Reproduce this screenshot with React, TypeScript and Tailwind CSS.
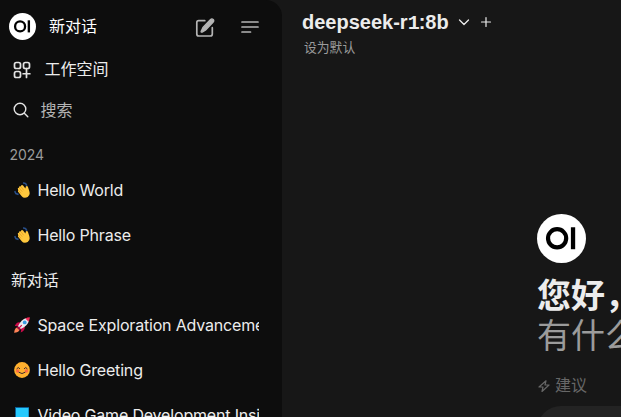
import React from "react";

const latin = "font-['Inter','Noto_Sans_CJK_SC',sans-serif]";

function Logo({ className }: { className: string }) {
  return (
    <svg viewBox="0 0 48 48" className={className}>
      <circle cx="24" cy="24" r="24" fill="#fff" />
      <circle cx="19.7" cy="23.8" r="8.9" fill="none" stroke="#000" strokeWidth="4.1" />
      <rect x="33.2" y="13" width="4.2" height="21.5" fill="#000" />
    </svg>
  );
}

function Wave() {
  return (
    <svg viewBox="0 0 16 16" className="h-4 w-4 shrink-0">
      <path d="M9 1Q12 .8 12.8 3.8M.7 9.2l1.2 2.3 2.7 1" fill="none" stroke="#284e88" strokeWidth="1.6" />
      <path d="M4.3 8.5 3.8 6.4Q4 5.2 5 5.900L5.200 4.600q.8-.9 1.600 0L7.300 3.200q1-.7 1.800.4l2.300 3 .4-2.100q1.200-1.300 2.100.2l.8 2.500q2.400 5.600-1 7.800-3.800 2-6.200-1.100L4.300 10q-.7-1 0-1.500Z" fill="#ffc83d" />
      <path d="m5.200 6 3 3.700M6.900 4.600l2.800 3.700M4.600 8.400l2.500 3" stroke="#d79023" strokeWidth=".6" fill="none" />
    </svg>
  );
}

function Rocket() {
  return (
    <svg viewBox="0 0 16 16" className="h-4 w-4 shrink-0">
      <path d="M5.5 5.2Q2.2 5 .8 9l3.5.3 3 3.2-.6 3Q11 13.8 10.8 10Z" fill="#ca0b4a" />
      <path d="M2.7 10.4Q.5 11.5.1 15.8q4.2-.2 5.4-2.8Z" fill="#ff8257" />
      <path d="M4 9.3Q7 2.2 12.5.9l2.6 2.5Q13.5 9 6.7 12.1Z" fill="#e9e9ef" />
      <path d="M11.3 1.5Q13.8.1 15.8.2q.2 2.2-1.2 4.5Z" fill="#ef2855" />
      <path d="m3.6 9.2 3.3 3.1-1.2 1-3-3Z" fill="#a20945" />
      <circle cx="10.7" cy="5.4" r="1.9" fill="#3a9be2" />
      <path d="m5 11 2.8-2.9" stroke="#d90b4c" strokeWidth="1.1" />
    </svg>
  );
}

function Smile() {
  return (
    <svg viewBox="0 0 16 16" className="h-4 w-4 shrink-0">
      <circle cx="8" cy="8" r="7.9" fill="#ffb02e" />
      <circle cx="3.6" cy="9" r="1.7" fill="#ff6a45" />
      <circle cx="12.4" cy="9" r="1.7" fill="#ff6a45" />
      <path d="M2.8 6.6q1.5-2.5 3 0M10.2 6.600q1.500-2.500 3 0M5 10.400q3 2.600 6 0" fill="none" stroke="#402a32" strokeWidth="1" strokeLinecap="round" />
    </svg>
  );
}

function Book() {
  return (
    <svg viewBox="0 0 16 16" className="h-4 w-4 shrink-0">
      <rect x="1" y="0" width="14" height="16" fill="#0b5d94" />
      <rect x="2" y="1" width="12.5" height="15" fill="#26c9fc" />
    </svg>
  );
}

function ChatRow({ icon, title }: { icon?: React.ReactNode; title: string }) {
  return (
    <div className="flex h-[45px] shrink-0 items-center overflow-hidden whitespace-nowrap">
      {icon && <span className="mr-[7.500px] ml-[3px] flex">{icon}</span>}
      <span>{title}</span>
    </div>
  );
}

function Sidebar() {
  return (
    <aside className="flex h-full w-[282px] shrink-0 flex-col overflow-hidden rounded-tr-2xl bg-[#0d0d0d] text-[#ececec]">
      <div className="flex h-[53px] shrink-0 items-center pl-[9px]">
        <Logo className="h-[27px] w-[27px]" />
        <span className="mb-px ml-[13px] w-[146px] text-base text-white">新对话</span>
        <svg viewBox="0 0 20 20" className="mt-0.5 h-5 w-5 text-[#b4b4b4]" fill="none" stroke="currentColor">
          <path d="M9.800 2.700H3.700Q1.800 2.700 1.800 4.600V16q0 2 2 2h11.500q2 0 2-2V9.700" strokeWidth="1.700" strokeLinecap="round" />
          <path d="M15.300 1.700q1.600-1.500 2.900-.2 1.200 1.200-.2 2.800l-7.300 7.600-3.500 2.200q-1.400.4-1-.9L8 9.400Z" fill="currentColor" strokeWidth="1.300" />
        </svg>
        <svg viewBox="0 0 18 14" className="ml-[26px] h-3.5 w-[18px]" fill="none" stroke="#b4b4b4" strokeWidth="1.7" strokeLinecap="round">
          <path d="M1 2h16M1 7h16M1 12h8.500" />
        </svg>
      </div>
      <div className="flex h-8 shrink-0 items-center pl-[13px]">
        <svg viewBox="0 0 24 24" className="mt-0.5 h-[18px] w-[18px]" fill="none" stroke="#e3e3e3" strokeWidth="2.3" strokeLinecap="round">
          <rect x="2" y="2" width="8" height="8" rx="2.5" />
          <rect x="14" y="2" width="8" height="8" rx="2.5" />
          <rect x="2" y="14" width="8" height="8" rx="2.5" />
          <path d="M18 10v12M13.500 17h9" />
        </svg>
        <span className="ml-[13.500px] text-base">工作空间</span>
      </div>
      <div className="mt-[9px] flex h-8 shrink-0 items-center pl-[13px]">
        <svg viewBox="0 0 16 16" className="h-4 w-4" fill="none" stroke="#e3e3e3" strokeWidth="1.4" strokeLinecap="round">
          <circle cx="7" cy="7" r="5.8" />
          <path d="m11.300 11.300 3.500 3.500" />
        </svg>
        <span className="mb-px ml-[11.500px] text-base text-[#b4b4b4]">搜索</span>
      </div>
      <div className="mt-[19px] h-5 shrink-0 pl-[9.500px] text-sm tracking-[-0.1px] text-[#9b9b9b]">2024</div>
      <div className="mt-0.5 ml-[11px] flex w-[248px] flex-col overflow-hidden text-base tracking-[-0.18px]">
        <ChatRow icon={<Wave />} title="Hello World" />
        <ChatRow icon={<Wave />} title="Hello Phrase" />
        <ChatRow title="新对话" />
        <ChatRow icon={<Rocket />} title="Space Exploration Advancements" />
        <ChatRow icon={<Smile />} title="Hello Greeting" />
        <ChatRow icon={<Book />} title="Video Game Development Insights" />
      </div>
    </aside>
  );
}

export default function App() {
  return (
    <div className={`flex h-[417px] w-[621px] overflow-hidden bg-[#171717] ${latin}`}>
      <Sidebar />
      <main className="flex min-w-0 flex-1 flex-col overflow-hidden whitespace-nowrap">
        <div className="mt-[7px] ml-5 flex h-[30px] shrink-0 items-center text-[#ececec]">
          <h1 className="w-[147px] pt-0.5 font-['Liberation_Sans',sans-serif] text-xl font-bold">
            deepseek-r<span className="font-['Liberation_Mono',monospace] tracking-[-1px]">1</span>:8b
          </h1>
          <svg viewBox="0 0 12 12" className="ml-[9px] h-3 w-3" fill="none" stroke="currentColor" strokeWidth="1.3" strokeLinecap="round" strokeLinejoin="round">
            <path d="m1.500 4 4.500 4.500L10.500 4" />
          </svg>
          <svg viewBox="0 0 12 12" className="ml-[10px] h-3 w-3" fill="none" stroke="currentColor" strokeWidth="1.2" strokeLinecap="round">
            <path d="M1.500 6h9M6 1.500v9" />
          </svg>
        </div>
        <div className="ml-[22px] h-[22px] shrink-0 text-[12.800px] leading-[22px] text-[#9b9b9b]">设为默认</div>
        <Logo className="mt-[155px] ml-[255px] h-[49px] w-[49px] shrink-0" />
        <div className="mt-[13px] ml-[255px] h-10 shrink-0 text-[34px] leading-10 font-bold text-[#ececec]">您好，</div>
        <div className="ml-[255px] h-10 shrink-0 text-[34px] leading-10 font-normal text-[#9b9b9b]">有什么</div>
        <div className="mt-[17px] ml-[255px] flex h-6 shrink-0 items-center text-base text-[#676767]">
          <svg viewBox="0 0 12 12" className="mt-0.5 ml-px h-3 w-3" fill="none" stroke="currentColor" strokeWidth="1.2" strokeLinejoin="round">
            <path d="M8 .8 1 7h4L4 11.500 11 5H7Z" />
          </svg>
          <span className="ml-[5px]">建议</span>
        </div>
        <div className="mt-[9px] ml-[255px] h-12 w-60 shrink-0 rounded-3xl bg-[#232323]" />
      </main>
    </div>
  );
}
